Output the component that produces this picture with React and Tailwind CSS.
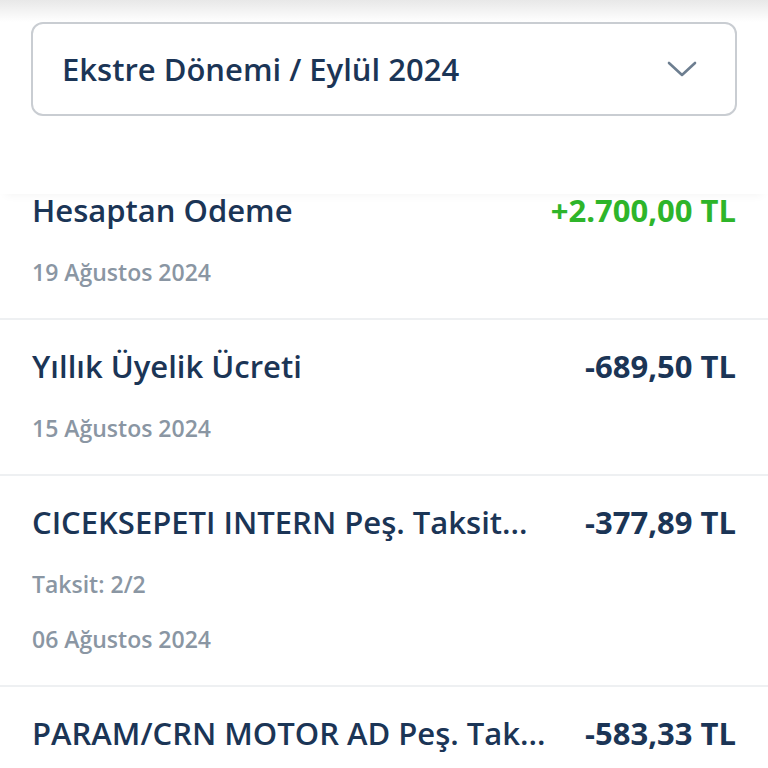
const items = [
  { title: "Hesaptan Odeme", amount: "+2.700,00 TL", positive: true, lines: ["19 Ağustos 2024"] },
  { title: "Yıllık Üyelik Ücreti", amount: "-689,50 TL", lines: ["15 Ağustos 2024"] },
  { title: "CICEKSEPETI INTERN Peş. Taksit...", amount: "-377,89 TL", lines: ["Taksit: 2/2", "06 Ağustos 2024"] },
  { title: "PARAM/CRN MOTOR AD Peş. Tak...", amount: "-583,33 TL", lines: [] },
];

export default function App() {
  return (
    <div className="h-[768px] overflow-hidden bg-white font-['Open_Sans',sans-serif]">
      {/* period select */}
      <div className="relative z-10 bg-gradient-to-b from-[#e8e8e8] via-white via-[22px] to-white px-[31px] pt-[22px] pb-[78px] shadow-[0_6px_10px_-6px_rgba(0,0,0,0.06)]">
        <button className="flex h-[94px] w-full items-center justify-between rounded-[12px] border-2 border-[#c9cdd2] bg-white pl-[29px] pr-[38px]">
          <span className="text-[31px] font-semibold text-[#1b3556]">Ekstre Dönemi / Eylül 2024</span>
          <svg width="30" height="16" viewBox="0 0 30 16" fill="none" stroke="#6d7e90" strokeWidth="2.6" strokeLinecap="round" strokeLinejoin="round">
            <polyline points="2,2 15,14 28,2" />
          </svg>
        </button>
      </div>

      {/* transactions */}
      <ul className="-mt-[4px]">
        {items.map((it, i) => (
          <li key={i} className={`border-b-2 border-[#eef0f2] px-8 pb-[31px] ${i === 0 ? "pt-0" : "pt-[26px]"}`}>
            <div className="flex items-baseline justify-between gap-8">
              <span className="whitespace-nowrap text-[31px] leading-[40px] font-semibold text-[#1b3556]">{it.title}</span>
              <span className={`shrink-0 text-[31px] leading-[40px] font-bold ${it.positive ? "text-[#2eb52a]" : "text-[#1b3556]"}`}>{it.amount}</span>
            </div>
            {it.lines.map((l, j) => (
              <div key={l} className={`${j === 0 ? "mt-[27px]" : "mt-[25px]"} text-[23px] leading-[30px] font-semibold text-[#8a96a3]`}>{l}</div>
            ))}
          </li>
        ))}
      </ul>
    </div>
  );
}
